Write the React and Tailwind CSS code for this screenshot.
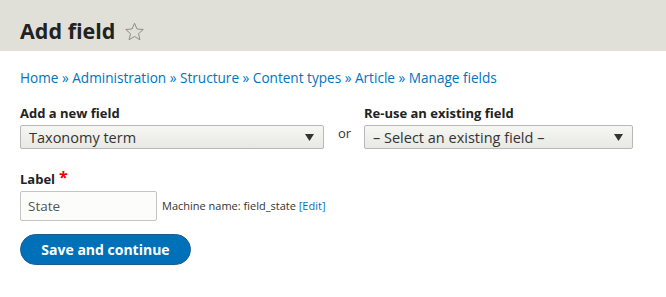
import React from "react";

const Star = () => (
  <svg width="21" height="21" viewBox="0 0 24 24" className="ml-[9px] mt-[2px]">
    <path
      d="M12 2.5l2.85 6.6 7.15.62-5.42 4.7 1.62 7.03L12 17.7l-6.2 3.75 1.62-7.03L2 9.72l7.15-.62z"
      fill="none"
      stroke="#8a8a85"
      strokeWidth="1.1"
      strokeLinejoin="round"
    />
  </svg>
);

const Caret = () => (
  <svg width="9" height="7" viewBox="0 0 9 7">
    <path d="M0 0h9L4.5 7z" fill="#333" />
  </svg>
);

const Select = ({ text, width }) => (
  <div
    className={`flex items-center justify-between h-[24px] border border-[#b8b8b8] rounded-[2px] bg-gradient-to-b from-[#f6f6f3] to-[#e8e8e4] pl-[8px] pr-[9px] text-[14.5px] text-[#333] ${width}`}
  >
    <span>{text}</span>
    <Caret />
  </div>
);

export default function App() {
  return (
    <div className="w-[666px] h-[297px] bg-white font-['Open_Sans',sans-serif] text-[#333]">
      <div className="h-[51px] bg-[#e0e0d8] flex items-center pl-[20px] pt-[10px]">
        <h1 className="text-[21.5px] font-bold text-[#222] leading-none">Add field</h1>
        <Star />
      </div>
      <div className="pl-[20px] pt-[17px] text-[13.6px] text-[#0074bd]">
        Home » Administration » Structure » Content types » Article » Manage fields
      </div>
      <div className="flex items-end pl-[20px] mt-[16px]">
        <div className="flex flex-col">
          <div className="text-[13px] font-bold text-[#222] leading-[18px] mb-[3px]">Add a new field</div>
          <Select text="Taxonomy term" width="w-[304px]" />
        </div>
        <div className="w-[40px] text-center text-[13px] text-[#333] pb-[6px] pl-[1px]">or</div>
        <div className="flex flex-col">
          <div className="text-[13px] font-bold text-[#222] leading-[18px] mb-[3px]">Re-use an existing field</div>
          <Select text="– Select an existing field –" width="w-[269px]" />
        </div>
      </div>
      <div className="pl-[20px] mt-[21px]">
        <div className="text-[13px] font-bold text-[#222] leading-[18px] mb-[3px] flex items-start">
          Label<span className="text-[#e00] ml-[4px] text-[16px] leading-[14px]">*</span>
        </div>
        <div className="flex items-center">
          <div className="w-[137px] h-[30px] border border-[#c4c4c4] rounded-[2px] bg-[#fcfcfa] flex items-center pl-[7px] text-[13.5px] text-[#555]">
            State
          </div>
          <span className="ml-[5px] text-[11px] text-[#333]">
            Machine name: field_state <span className="text-[#0074bd]">[Edit]</span>
          </span>
        </div>
        <button className="mt-[13px] h-[31px] w-[171px] rounded-full bg-[#0071b8] border border-[#1e5c90] text-white text-[14px] font-bold">
          Save and continue
        </button>
      </div>
    </div>
  );
}
